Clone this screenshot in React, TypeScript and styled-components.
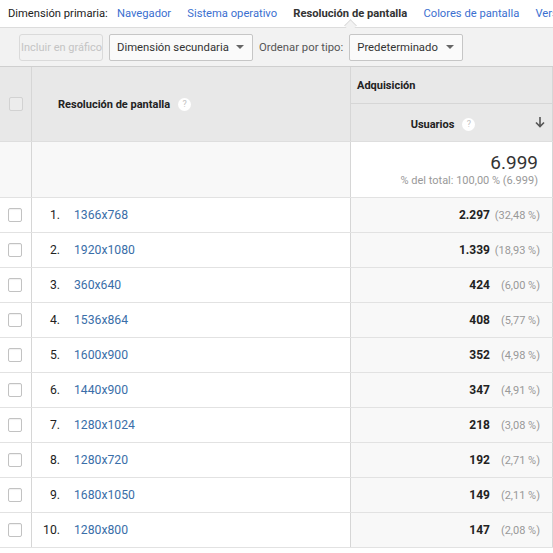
import React from "react";
import styled, { createGlobalStyle } from "styled-components";

const Global = createGlobalStyle`
  html, body { margin: 0; padding: 0; background: #fff; }
  body { font-family: Roboto, "Noto Sans", Arial, sans-serif; color: #222; overflow: hidden; }
  * { box-sizing: border-box; }
`;

const Page = styled.div`
  width: 553px;
  height: 553px;
  overflow: hidden;
  background: #fff;
`;

const TopBar = styled.div`
  height: 28px;
  display: flex;
  align-items: center;
  padding-left: 8px;
  gap: 16.2px;
  border-bottom: 1px solid #dcdcdc;
  font-size: 11.2px;
  white-space: nowrap;
  position: relative;
`;

const Label = styled.span`
  color: #222;
  margin-right: -7px;
`;

const Tab = styled.span<{ $active?: boolean }>`
  position: relative;
  color: ${(p) => (p.$active ? "#333" : "#3b6fd0")};
  font-weight: ${(p) => (p.$active ? 700 : 400)};
  ${(p) =>
    p.$active &&
    `
    &::after {
      content: "";
      position: absolute;
      left: 50%;
      bottom: -10px;
      width: 8px;
      height: 8px;
      margin-left: -4px;
      background: #f2f2f2;
      border-top: 1px solid #dcdcdc;
      border-left: 1px solid #dcdcdc;
      transform: rotate(45deg);
    }
  `}
`;

const Toolbar = styled.div`
  height: 38px;
  background: #f2f2f2;
  display: flex;
  align-items: center;
  padding-left: 19px;
  gap: 6px;
  font-size: 11.3px;
  white-space: nowrap;
`;

const DisabledButton = styled.div`
  height: 27px;
  width: 84px;
  display: flex;
  align-items: center;
  padding-left: 1px;
  border: 1px solid #dadada;
  border-radius: 3px;
  color: #c4c4c4;
  font-size: 11px;
  overflow: hidden;
`;

const Select = styled.div<{ $w: number }>`
  height: 27px;
  width: ${(p) => p.$w}px;
  display: flex;
  align-items: center;
  justify-content: space-between;
  padding: 0 8px 0 7px;
  border: 1px solid #c6c6c6;
  border-radius: 2px;
  background: #fafafa;
  color: #333;
`;

const Caret = styled.span`
  width: 0;
  height: 0;
  border-left: 4px solid transparent;
  border-right: 4px solid transparent;
  border-top: 4px solid #666;
`;

const SortLabel = styled.span`
  color: #555;
`;

const Table = styled.div`
  border-top: 1px solid #cfcfcf;
`;

const Row = styled.div<{ $h: number }>`
  display: grid;
  grid-template-columns: 32px 319px 202px;
  height: ${(p) => p.$h}px;
  border-bottom: 1px solid #e2e2e2;
`;

const HeaderRow = styled(Row)`
  background: #e8e8e8;
  border-bottom: 1px solid #dedede;
`;

const CheckCell = styled.div<{ $bg?: string }>`
  display: flex;
  align-items: center;
  justify-content: flex-start;
  padding-left: 8px;
  border-right: 1px solid #d6d6d6;
  background: ${(p) => p.$bg || "#fff"};
`;

const Checkbox = styled.span<{ $head?: boolean }>`
  width: 14px;
  height: 14px;
  border: 1px solid ${(p) => (p.$head ? "#d2d2d2" : "#c2c2c2")};
  border-radius: 2px;
  background: ${(p) => (p.$head ? "#ececec" : "#fff")};
  ${(p) => (p.$head ? "margin-left: 1px;" : "box-shadow: inset 0 1px 1px rgba(0,0,0,0.06);")}
`;

const DimHeader = styled.div`
  display: flex;
  align-items: center;
  padding-left: 26px;
  border-right: 1px solid #d6d6d6;
  font-size: 11px;
  font-weight: 700;
  color: #222;
  gap: 8px;
`;

const Help = styled.span`
  width: 13px;
  height: 13px;
  border-radius: 50%;
  background: #fff;
  color: #c2c2c2;
  font-size: 9px;
  font-weight: 400;
  display: inline-flex;
  align-items: center;
  justify-content: center;
`;

const MetricHeader = styled.div`
  display: grid;
  grid-template-rows: 37px 1fr;
  border-right: 1px solid #d6d6d6;
`;

const GroupTitle = styled.div`
  display: flex;
  align-items: center;
  padding-left: 6px;
  font-size: 11px;
  font-weight: 700;
  color: #222;
  border-bottom: 1px solid #d6d6d6;
`;

const MetricTitle = styled.div`
  display: flex;
  align-items: center;
  padding: 3px 7px 0 0;
  font-size: 11px;
  font-weight: 700;
  color: #222;
`;

const MetricLabel = styled.span`
  margin: 0 auto;
  display: inline-flex;
  align-items: center;
  gap: 8px;
`;

const DimCell = styled.div<{ $bg?: string }>`
  display: flex;
  align-items: center;
  border-right: 1px solid #d6d6d6;
  background: ${(p) => p.$bg || "#fff"};
  font-size: 12.2px;
`;

const Index = styled.span`
  width: 28px;
  text-align: right;
  color: #222;
  margin-right: 14px;
`;

const Link = styled.span`
  color: #3a6ea8;
`;

const TotalCell = styled.div`
  display: flex;
  flex-direction: column;
  align-items: flex-end;
  justify-content: center;
  padding-right: 14px;
  border-right: 1px solid #d6d6d6;
  background: #fff;
`;

const TotalValue = styled.div`
  font-size: 19px;
  color: #333;
  line-height: 22px;
`;

const TotalSub = styled.div`
  font-size: 11px;
  color: #999;
  line-height: 14px;
`;

const ValueCell = styled.div`
  display: flex;
  align-items: center;
  justify-content: flex-end;
  padding-right: 12px;
  border-right: 1px solid #d6d6d6;
  background: #f8f8f8;
  font-size: 12px;
`;

const Value = styled.span`
  font-weight: 700;
  color: #222;
`;

const Pct = styled.span`
  width: 50px;
  text-align: right;
  color: #999;
  font-size: 11px;
`;

const rows = [
  ["1366x768", "2.297", "(32,48 %)"],
  ["1920x1080", "1.339", "(18,93 %)"],
  ["360x640", "424", "(6,00 %)"],
  ["1536x864", "408", "(5,77 %)"],
  ["1600x900", "352", "(4,98 %)"],
  ["1440x900", "347", "(4,91 %)"],
  ["1280x1024", "218", "(3,08 %)"],
  ["1280x720", "192", "(2,71 %)"],
  ["1680x1050", "149", "(2,11 %)"],
  ["1280x800", "147", "(2,08 %)"],
];

const SortArrow = () => (
  <svg width="10" height="12" viewBox="0 0 10 12" style={{ marginTop: -4 }}>
    <path d="M5 1 V10.5 M1 6.5 L5 10.5 L9 6.5" stroke="#555" strokeWidth="1.6" fill="none" />
  </svg>
);

export default function App() {
  return (
    <Page>
      <Global />
      <TopBar>
        <Label>Dimensión primaria:</Label>
        <Tab>Navegador</Tab>
        <Tab>Sistema operativo</Tab>
        <Tab $active>Resolución de pantalla</Tab>
        <Tab>Colores de pantalla</Tab>
        <Tab>Versión de Flash</Tab>
      </TopBar>
      <Toolbar>
        <DisabledButton>Incluir en gráfico</DisabledButton>
        <Select $w={144}>
          Dimensión secundaria
          <Caret />
        </Select>
        <SortLabel>Ordenar por tipo:</SortLabel>
        <Select $w={114}>
          Predeterminado
          <Caret />
        </Select>
      </Toolbar>
      <Table>
        <HeaderRow $h={75}>
          <CheckCell $bg="#e8e8e8">
            <Checkbox $head />
          </CheckCell>
          <DimHeader>
            Resolución de pantalla
            <Help>?</Help>
          </DimHeader>
          <MetricHeader>
            <GroupTitle>Adquisición</GroupTitle>
            <MetricTitle>
              <MetricLabel>
                Usuarios
                <Help>?</Help>
              </MetricLabel>
              <SortArrow />
            </MetricTitle>
          </MetricHeader>
        </HeaderRow>
        <Row $h={56}>
          <CheckCell $bg="#f8f8f8" />
          <DimCell $bg="#f8f8f8" />
          <TotalCell>
            <TotalValue>6.999</TotalValue>
            <TotalSub>% del total: 100,00 % (6.999)</TotalSub>
          </TotalCell>
        </Row>
        {rows.map(([res, val, pct], i) => (
          <Row $h={35} key={res}>
            <CheckCell>
              <Checkbox />
            </CheckCell>
            <DimCell>
              <Index>{i + 1}.</Index>
              <Link>{res}</Link>
            </DimCell>
            <ValueCell>
              <Value>{val}</Value>
              <Pct>{pct}</Pct>
            </ValueCell>
          </Row>
        ))}
      </Table>
    </Page>
  );
}
